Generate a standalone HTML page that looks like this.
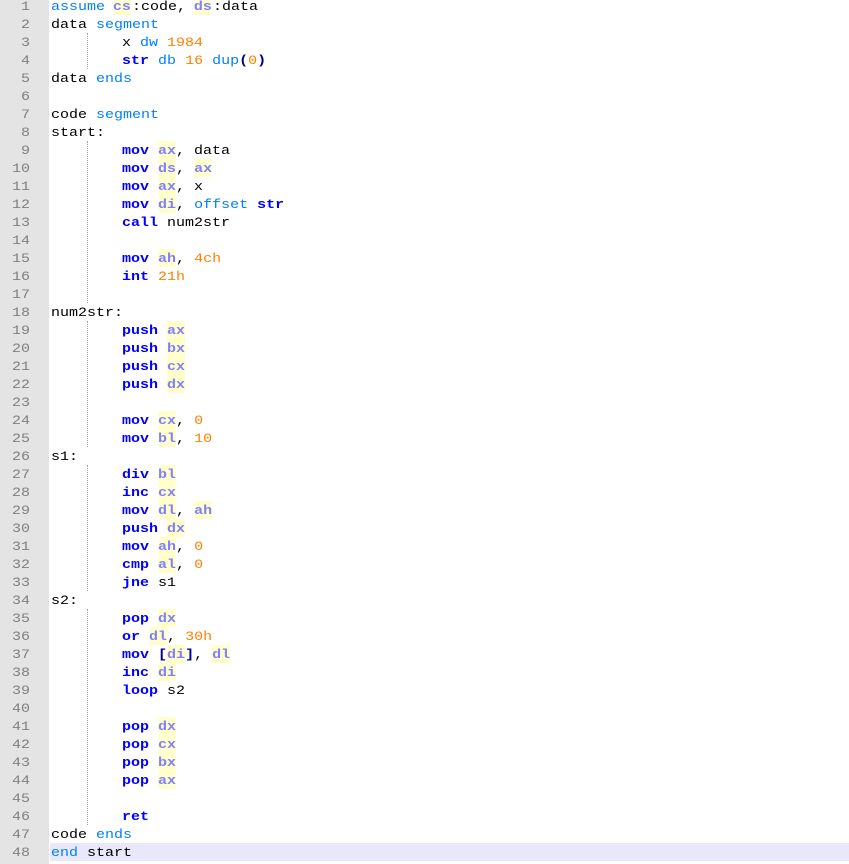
<!DOCTYPE html>
<html><head><meta charset="utf-8">
<style>
html,body{margin:0;padding:0;background:#fff;width:849px;height:864px;overflow:hidden}
#g{position:absolute;left:0;top:0;width:49px;height:864px;background:#e4e4e4}
#cur{position:absolute;left:50px;top:843px;width:799px;height:18px;background:#e8e8fa}
.n,.l{position:absolute;height:18px;line-height:20px;font-family:"Liberation Mono",monospace;font-size:13px;white-space:pre}
.n{left:0;width:30px;text-align:right;color:#808080;transform:scaleX(1.1538);transform-origin:right center}
.l{left:51px;color:#000;transform:scaleX(1.1538);transform-origin:left center}
.l.t{left:50px}
.f s{position:relative;left:-1px}
.v{position:absolute;left:87px;width:0;border-left:1px dotted #a0a0a0}
b{color:#0000ff;font-weight:bold}
i{font-style:normal;color:#0080ff}
u{text-decoration:none;color:#ff8000}
s{text-decoration:none;color:#8080ff;font-weight:bold;background:#ffffcc;display:inline-block;height:18px;vertical-align:top}
em{font-style:normal;font-weight:bold;color:#000080}
</style></head><body>
<div id="g"></div><div id="cur"></div>
<div class="v" style="top:33px;height:36px"></div>
<div class="v" style="top:141px;height:162px"></div>
<div class="v" style="top:321px;height:126px"></div>
<div class="v" style="top:465px;height:126px"></div>
<div class="v" style="top:609px;height:216px"></div>
<div class="n" style="top:-3px">1</div><div class="l f" style="top:-3px"><i>assume</i> <s>cs</s>:code, <s>ds</s>:data</div>
<div class="n" style="top:15px">2</div><div class="l" style="top:15px">data <i>segment</i></div>
<div class="n" style="top:33px">3</div><div class="l t" style="top:33px">        x <i>dw</i> <u>1984</u></div>
<div class="n" style="top:51px">4</div><div class="l t" style="top:51px">        <b>str</b> <i>db</i> <u>16</u> <i>dup</i><em>(</em><u>0</u><em>)</em></div>
<div class="n" style="top:69px">5</div><div class="l" style="top:69px">data <i>ends</i></div>
<div class="n" style="top:87px">6</div>
<div class="n" style="top:105px">7</div><div class="l" style="top:105px">code <i>segment</i></div>
<div class="n" style="top:123px">8</div><div class="l" style="top:123px">start:</div>
<div class="n" style="top:141px">9</div><div class="l t" style="top:141px">        <b>mov</b> <s>ax</s>, data</div>
<div class="n" style="top:159px">10</div><div class="l t" style="top:159px">        <b>mov</b> <s>ds</s>, <s>ax</s></div>
<div class="n" style="top:177px">11</div><div class="l t" style="top:177px">        <b>mov</b> <s>ax</s>, x</div>
<div class="n" style="top:195px">12</div><div class="l t" style="top:195px">        <b>mov</b> <s>di</s>, <i>offset</i> <b>str</b></div>
<div class="n" style="top:213px">13</div><div class="l t" style="top:213px">        <b>call</b> num2str</div>
<div class="n" style="top:231px">14</div>
<div class="n" style="top:249px">15</div><div class="l t" style="top:249px">        <b>mov</b> <s>ah</s>, <u>4ch</u></div>
<div class="n" style="top:267px">16</div><div class="l t" style="top:267px">        <b>int</b> <u>21h</u></div>
<div class="n" style="top:285px">17</div>
<div class="n" style="top:303px">18</div><div class="l" style="top:303px">num2str:</div>
<div class="n" style="top:321px">19</div><div class="l t" style="top:321px">        <b>push</b> <s>ax</s></div>
<div class="n" style="top:339px">20</div><div class="l t" style="top:339px">        <b>push</b> <s>bx</s></div>
<div class="n" style="top:357px">21</div><div class="l t" style="top:357px">        <b>push</b> <s>cx</s></div>
<div class="n" style="top:375px">22</div><div class="l t" style="top:375px">        <b>push</b> <s>dx</s></div>
<div class="n" style="top:393px">23</div>
<div class="n" style="top:411px">24</div><div class="l t" style="top:411px">        <b>mov</b> <s>cx</s>, <u>0</u></div>
<div class="n" style="top:429px">25</div><div class="l t" style="top:429px">        <b>mov</b> <s>bl</s>, <u>10</u></div>
<div class="n" style="top:447px">26</div><div class="l" style="top:447px">s1:</div>
<div class="n" style="top:465px">27</div><div class="l t" style="top:465px">        <b>div</b> <s>bl</s></div>
<div class="n" style="top:483px">28</div><div class="l t" style="top:483px">        <b>inc</b> <s>cx</s></div>
<div class="n" style="top:501px">29</div><div class="l t" style="top:501px">        <b>mov</b> <s>dl</s>, <s>ah</s></div>
<div class="n" style="top:519px">30</div><div class="l t" style="top:519px">        <b>push</b> <s>dx</s></div>
<div class="n" style="top:537px">31</div><div class="l t" style="top:537px">        <b>mov</b> <s>ah</s>, <u>0</u></div>
<div class="n" style="top:555px">32</div><div class="l t" style="top:555px">        <b>cmp</b> <s>al</s>, <u>0</u></div>
<div class="n" style="top:573px">33</div><div class="l t" style="top:573px">        <b>jne</b> s1</div>
<div class="n" style="top:591px">34</div><div class="l" style="top:591px">s2:</div>
<div class="n" style="top:609px">35</div><div class="l t" style="top:609px">        <b>pop</b> <s>dx</s></div>
<div class="n" style="top:627px">36</div><div class="l t" style="top:627px">        <b>or</b> <s>dl</s>, <u>30h</u></div>
<div class="n" style="top:645px">37</div><div class="l t" style="top:645px">        <b>mov</b> <em>[</em><s>di</s><em>]</em>, <s>dl</s></div>
<div class="n" style="top:663px">38</div><div class="l t" style="top:663px">        <b>inc</b> <s>di</s></div>
<div class="n" style="top:681px">39</div><div class="l t" style="top:681px">        <b>loop</b> s2</div>
<div class="n" style="top:699px">40</div>
<div class="n" style="top:717px">41</div><div class="l t" style="top:717px">        <b>pop</b> <s>dx</s></div>
<div class="n" style="top:735px">42</div><div class="l t" style="top:735px">        <b>pop</b> <s>cx</s></div>
<div class="n" style="top:753px">43</div><div class="l t" style="top:753px">        <b>pop</b> <s>bx</s></div>
<div class="n" style="top:771px">44</div><div class="l t" style="top:771px">        <b>pop</b> <s>ax</s></div>
<div class="n" style="top:789px">45</div>
<div class="n" style="top:807px">46</div><div class="l t" style="top:807px">        <b>ret</b></div>
<div class="n" style="top:825px">47</div><div class="l" style="top:825px">code <i>ends</i></div>
<div class="n" style="top:843px">48</div><div class="l" style="top:843px"><i>end</i> start</div>
</body></html>
